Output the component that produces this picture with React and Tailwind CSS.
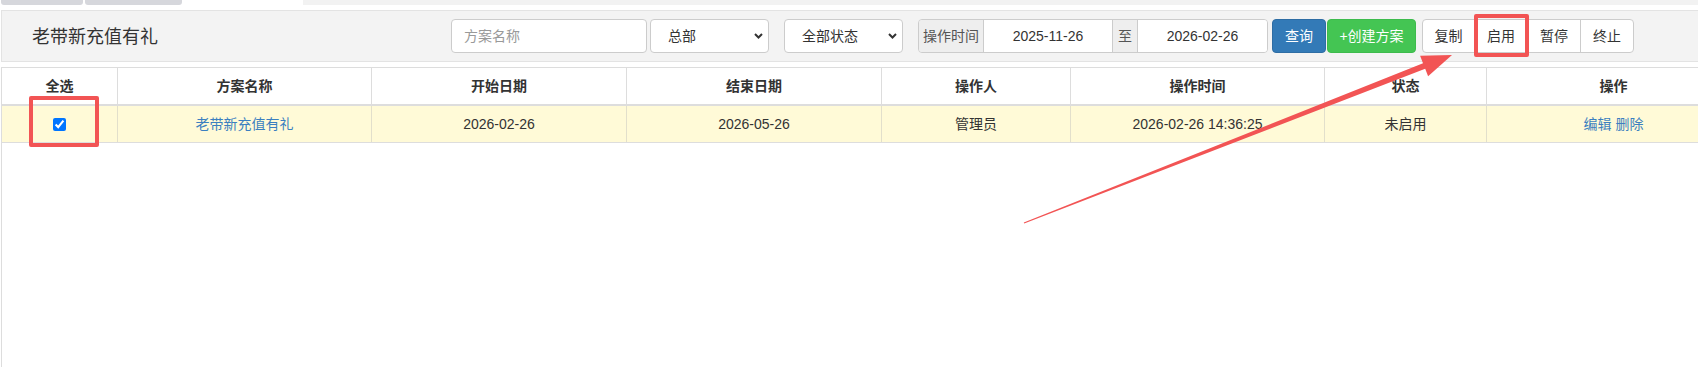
const FONT = { fontFamily: '"Liberation Sans", "Noto Sans CJK SC", sans-serif' };

const cols = [
  { w: 'w-[116px]', head: '全选' },
  { w: 'w-[254px]', head: '方案名称' },
  { w: 'w-[255px]', head: '开始日期' },
  { w: 'w-[255px]', head: '结束日期' },
  { w: 'w-[189px]', head: '操作人' },
  { w: 'w-[254px]', head: '操作时间' },
  { w: 'w-[162px]', head: '状态' },
  { w: 'w-[254px]', head: '操作' },
];

function Chevron() {
  return (
    <svg width="9" height="6" viewBox="0 0 9 6" className="shrink-0">
      <path d="M1 1l3.5 3.5L8 1" fill="none" stroke="#333" strokeWidth="2" />
    </svg>
  );
}

function FakeSelect({ label, className }) {
  return (
    <div className={`h-[34px] flex items-center justify-between bg-white border border-[#ccc] rounded-[4px] pl-[17px] pr-[5px] text-[14px] text-[#333] ${className}`}>
      <span>{label}</span>
      <Chevron />
    </div>
  );
}

export default function App() {
  const row = [
    <input key="c" type="checkbox" defaultChecked className="w-[13px] h-[13px]" />,
    <span key="n" className="text-[#3b7fc0]">老带新充值有礼</span>,
    '2026-02-26',
    '2026-05-26',
    '管理员',
    '2026-02-26 14:36:25',
    '未启用',
    <span key="o" className="text-[#3b7fc0]">编辑 删除</span>,
  ];

  return (
    <div className="relative w-[1698px] h-[367px] overflow-hidden bg-white text-[#333]" style={FONT}>
      {/* tab strip */}
      <div className="flex h-[5px] w-[1760px]">
        <div className="ml-px w-[82px] bg-[#d6d7dc] rounded-b-[3px]" />
        <div className="ml-[2px] w-[97px] bg-[#d6d7dc] rounded-b-[3px]" />
        <div className="w-[121px] bg-white" />
        <div className="flex-1 bg-[#f2f2f2]" />
      </div>

      {/* toolbar */}
      <div className="mt-[5px] ml-px w-[1760px] h-[52px] flex items-center bg-[#f3f3f3] border border-[#e3e3e3]">
        <div className="w-[449px] pl-[30px] text-[18px] pt-[3px]">老带新充值有礼</div>
        <div className="w-[196px] h-[34px] flex items-center bg-white border border-[#ccc] rounded-[4px] pl-[12px] text-[14px] text-[#999]">
          方案名称
        </div>
        <FakeSelect label="总部" className="ml-[3px] w-[119px]" />
        <FakeSelect label="全部状态" className="ml-[15px] w-[119px]" />
        <div className="ml-[15px] w-[350px] h-[34px] flex border border-[#ccc] rounded-[4px] overflow-hidden text-[14px]">
          <div className="w-[65px] flex items-center justify-center bg-[#eee] text-[#555] border-r border-[#ccc]">操作时间</div>
          <div className="w-[129px] flex items-center justify-center bg-white border-r border-[#ccc]">2025-11-26</div>
          <div className="w-[25px] flex items-center justify-center bg-[#eee] text-[#555] border-r border-[#ccc]">至</div>
          <div className="flex-1 flex items-center justify-center bg-white">2026-02-26</div>
        </div>
        <div className="ml-[4px] w-[54px] h-[34px] flex items-center justify-center bg-[#337ab7] border border-[#2e6da4] rounded-[4px] text-white text-[14px]">
          查询
        </div>
        <div className="ml-px w-[89px] h-[34px] flex items-center justify-center bg-[#44c553] border border-[#3dbb4c] rounded-[4px] text-white text-[14px]">
          +创建方案
        </div>
        <div className="ml-[6px] h-[34px] flex bg-white border border-[#ccc] rounded-[4px] text-[14px]">
          <div className="w-[52px] flex items-center justify-center border-r border-[#ccc]">复制</div>
          <div className="w-[53px] flex items-center justify-center border-r border-[#ccc]">启用</div>
          <div className="w-[53px] flex items-center justify-center border-r border-[#ccc]">暂停</div>
          <div className="w-[52px] flex items-center justify-center">终止</div>
        </div>
      </div>

      {/* table */}
      <div className="mt-[5px] ml-px w-[1760px] h-[300px] border-l border-[#ddd] text-[14px]">
        <div className="flex border-t border-b-2 border-[#ddd]">
          {cols.map((c) => (
            <div key={c.head} className={`${c.w} h-[36px] flex items-center justify-center font-bold border-r border-[#ddd]`}>
              {c.head}
            </div>
          ))}
        </div>
        <div className="flex bg-[#fffad7] border-b border-[#ddd]">
          {cols.map((c, i) => (
            <div key={c.head} className={`${c.w} h-[36px] flex items-center justify-center border-r border-[#e2dfcb]`}>
              {row[i]}
            </div>
          ))}
        </div>
      </div>

      {/* annotations */}
      <div className="absolute left-[29px] top-[96px] w-[70px] h-[51px] border-4 border-[#f25454] rounded-[2px]" />
      <div className="absolute left-[1474px] top-[14px] w-[55px] h-[43px] border-4 border-[#f25454] rounded-[2px]" />
      <svg className="absolute left-0 top-0 pointer-events-none" width="1698" height="367">
        <polygon
          points="1023.8,222.5 1423,63.2 1420.1,55.8 1452,55 1428.1,76.2 1425.2,68.8 1024.2,223.5"
          fill="#f25454"
        />
      </svg>
    </div>
  );
}
